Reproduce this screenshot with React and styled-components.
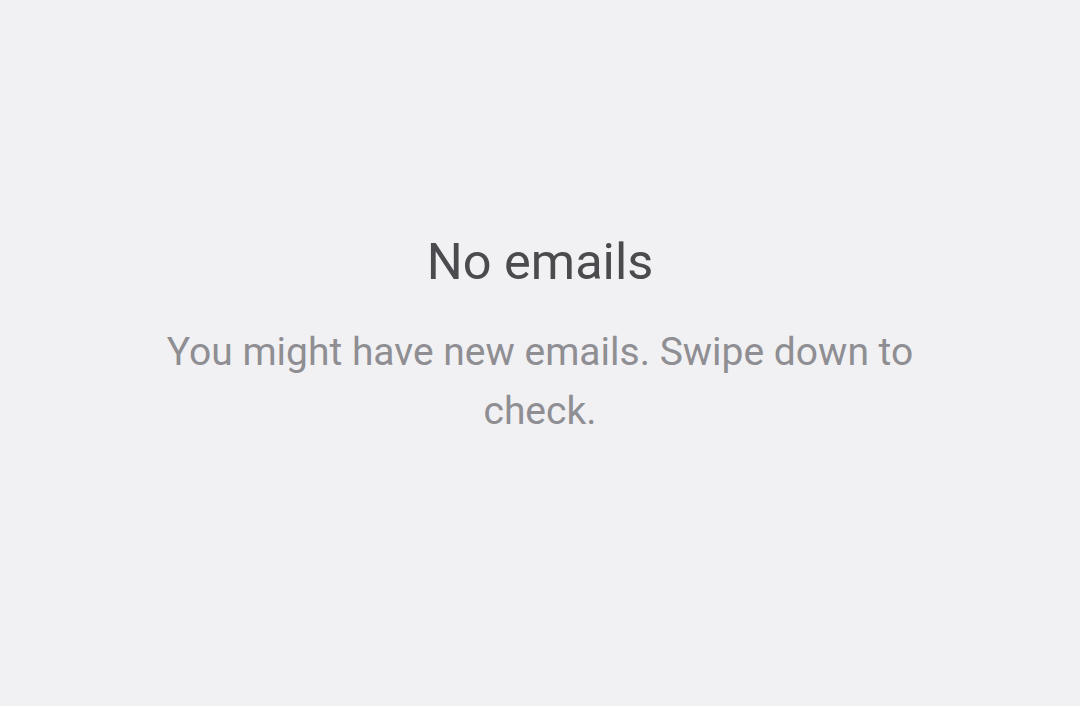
import React from "react"
import styled, { createGlobalStyle } from "styled-components"

const GlobalStyle = createGlobalStyle`
    html, body {
        margin: 0;
        padding: 0;
        background: #f1f1f3;
        font-family: Roboto, "Noto Sans", sans-serif;
    }
`

const Screen = styled.div`
    width: 1080px;
    height: 706px;
    display: flex;
    flex-direction: column;
    align-items: center;
    justify-content: center;
    box-sizing: border-box;
    padding: 0 120px 32px;
    background: #f1f1f3;
`

const Title = styled.h1`
    margin: 0;
    font-size: 50.5px;
    font-weight: 400;
    line-height: 58px;
    color: #4a4a4f;
`

const Message = styled.p`
    margin: 32px 0 0;
    font-size: 39px;
    font-weight: 400;
    line-height: 59px;
    color: #8e8e93;
    text-align: center;
`

function App() {
    return (
        <>
            <GlobalStyle />
            <Screen>
                <Title>No emails</Title>
                <Message>You might have new emails. Swipe down to check.</Message>
            </Screen>
        </>
    )
}

export default App
